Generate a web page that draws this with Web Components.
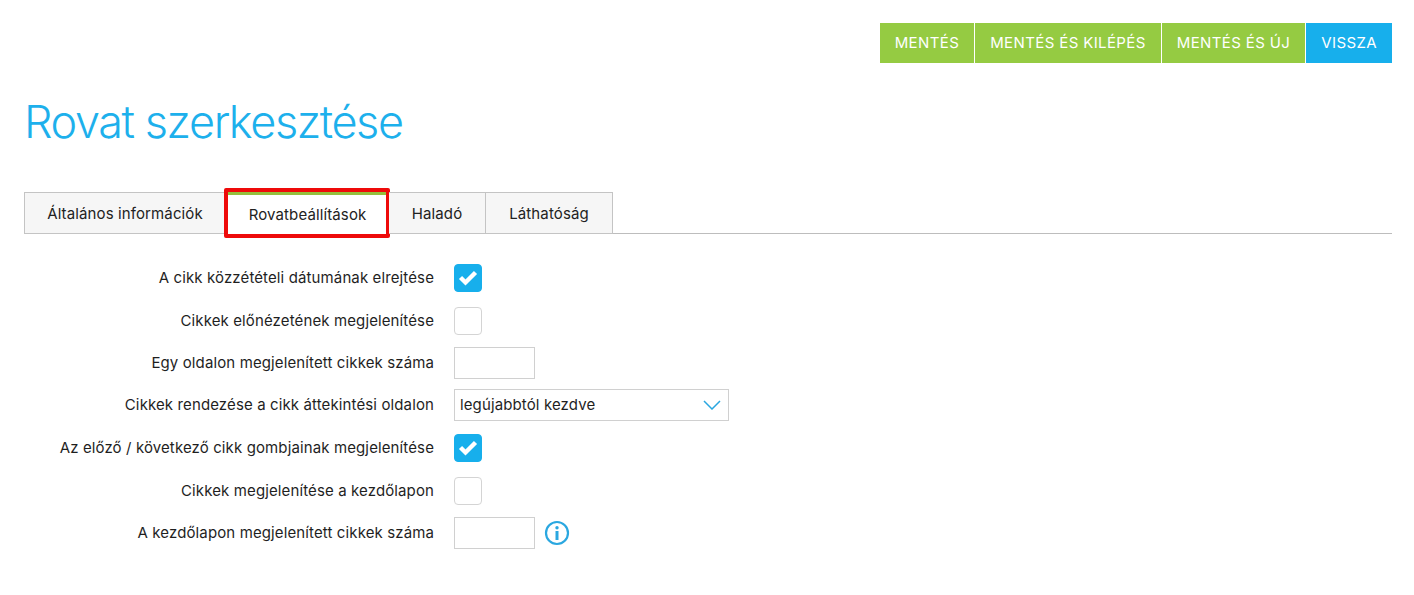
<!DOCTYPE html>
<html lang="hu">
<head>
<meta charset="utf-8">
<title>Rovat szerkesztése</title>
<style>
html,body{margin:0;padding:0;background:#fff;}
body{font-family:Inter,"Liberation Sans",sans-serif;color:#1f1f1f;}
</style>
</head>
<body>
<edit-page>
  <action-bar slot="actions">
    <action-btn>MENTÉS</action-btn>
    <action-btn>MENTÉS ÉS KILÉPÉS</action-btn>
    <action-btn>MENTÉS ÉS ÚJ</action-btn>
    <action-btn variant="back">VISSZA</action-btn>
  </action-bar>
  <page-title slot="title">Rovat szerkesztése</page-title>
  <tab-bar slot="tabs">
    <tab-item style="--w:202px">Általános információk</tab-item>
    <tab-item style="--w:163px" active>Rovatbeállítások</tab-item>
    <tab-item style="--w:97px">Haladó</tab-item>
    <tab-item style="--w:127px">Láthatóság</tab-item>
  </tab-bar>
  <form-row style="--h:28px;--mt:0px" label="A cikk közzétételi dátumának elrejtése"><check-box checked></check-box></form-row>
  <form-row style="--h:28px;--mt:15px" label="Cikkek előnézetének megjelenítése"><check-box></check-box></form-row>
  <form-row style="--h:32px;--mt:12px" label="Egy oldalon megjelenített cikkek száma"><text-box></text-box></form-row>
  <form-row style="--h:32px;--mt:10px" label="Cikkek rendezése a cikk áttekintési oldalon"><select-box>legújabbtól kezdve</select-box></form-row>
  <form-row style="--h:28px;--mt:13px" label="Az előző / következő cikk gombjainak megjelenítése"><check-box checked></check-box></form-row>
  <form-row style="--h:28px;--mt:15px" label="Cikkek megjelenítése a kezdőlapon"><check-box></check-box></form-row>
  <form-row style="--h:32px;--mt:12px" label="A kezdőlapon megjelenített cikkek száma"><text-box></text-box><info-icon></info-icon></form-row>
</edit-page>
<script>
function define(name, css, html, setup){
  customElements.define(name, class extends HTMLElement{
    constructor(){
      super();
      const root=this.attachShadow({mode:'open'});
      root.innerHTML='<style>'+css+'</style>'+html;
    }
    connectedCallback(){ if(setup) setup(this); }
  });
}
define('edit-page',
  `:host{display:block;padding:23px 22px 0 24px;box-sizing:border-box;width:1414px;height:595px;overflow:hidden;}
   .rows{display:block;margin-top:30px;}`,
  `<slot name="actions"></slot><slot name="title"></slot><slot name="tabs"></slot><div class="rows"><slot></slot></div>`);
define('action-bar',
  `:host{display:flex;justify-content:flex-end;gap:1px;}`,
  `<slot></slot>`);
define('action-btn',
  `:host{display:flex;align-items:center;justify-content:center;height:40px;padding:0 15px;background:#95cb42;color:#fff;font:400 15px/40px Inter,"Liberation Sans",sans-serif;letter-spacing:.38px;white-space:nowrap;}
   :host([variant=back]){background:#17afec;}`,
  `<slot></slot>`);
define('page-title',
  `:host{display:block;margin-top:30px;height:58px;color:#1db0ec;font:300 45px/58px Inter,"Liberation Sans",sans-serif;letter-spacing:-1.4px;white-space:nowrap;}`,
  `<slot></slot>`);
define('tab-bar',
  `:host{display:flex;margin-top:41px;height:41px;border-bottom:1px solid #bdbdbd;}`,
  `<slot></slot>`);
define('tab-item',
  `:host{display:flex;position:relative;box-sizing:border-box;align-items:center;justify-content:center;width:var(--w);height:42px;background:#f6f6f6;border:1px solid #c4c4c4;border-left-width:0;color:#222;font:400 15px/20px Inter,"Liberation Sans",sans-serif;letter-spacing:.12px;padding-top:1px;white-space:nowrap;}
   :host(:first-child){border-left-width:1px;}
   :host([active]){background:#fff;border-top:3px solid #95bf3c;border-bottom:0;height:43px;padding-top:0;border-right:0;}
   :host([active])::after{content:"";position:absolute;left:-2px;right:-1px;top:-7px;bottom:-3px;border:4px solid #ee0a0a;border-radius:2px;}`,
  `<slot></slot>`);
define('form-row',
  `:host{display:flex;align-items:center;gap:20px;height:var(--h);margin-top:var(--mt);}
   .l{flex:0 0 410px;text-align:right;font:400 15px/20px Inter,"Liberation Sans",sans-serif;letter-spacing:.12px;color:#1f1f1f;white-space:nowrap;}
   .c{display:flex;align-items:center;gap:9px;}`,
  `<span class="l"></span><span class="c"><slot></slot></span>`,
  el=>{el.shadowRoot.querySelector('.l').textContent=el.getAttribute('label');});
define('check-box',
  `:host{display:block;box-sizing:border-box;width:28px;height:28px;border:1px solid #d4d4d4;border-radius:4px;background:#fff;}
   :host([checked]){background:#17afec;border-color:#17afec;}
   svg{display:none;width:26px;height:26px;}
   :host([checked]) svg{display:block;}`,
  `<svg viewBox="0 0 26 26"><path d="M5.5 12.5l5 5 10-10" fill="none" stroke="#fff" stroke-width="4.4"/></svg>`);
define('text-box',
  `:host{display:block;box-sizing:border-box;width:81px;height:32px;border:1px solid #d0d0d0;background:#fff;}`,
  ``);
define('select-box',
  `:host{display:flex;box-sizing:border-box;align-items:center;justify-content:space-between;width:275px;height:32px;border:1px solid #d0d0d0;background:#fff;padding:0 7px 0 5px;font:400 15px/20px Inter,"Liberation Sans",sans-serif;letter-spacing:.12px;color:#1f1f1f;}
   svg{width:18px;height:10px;}`,
  `<slot></slot><svg viewBox="0 0 18 10"><path d="M1 1l8 8 8-8" fill="none" stroke="#2aa7e0" stroke-width="1.5"/></svg>`);
define('info-icon',
  `:host{display:block;width:26px;height:26px;}
   svg{display:block;width:26px;height:26px;}`,
  `<svg viewBox="0 0 26 26"><circle cx="13" cy="13" r="11" fill="none" stroke="#2aa7e0" stroke-width="2.2"/><circle cx="13" cy="7.8" r="1.7" fill="#2aa7e0"/><path d="M13 11v9" stroke="#2aa7e0" stroke-width="3"/></svg>`);
</script>
</body>
</html>
